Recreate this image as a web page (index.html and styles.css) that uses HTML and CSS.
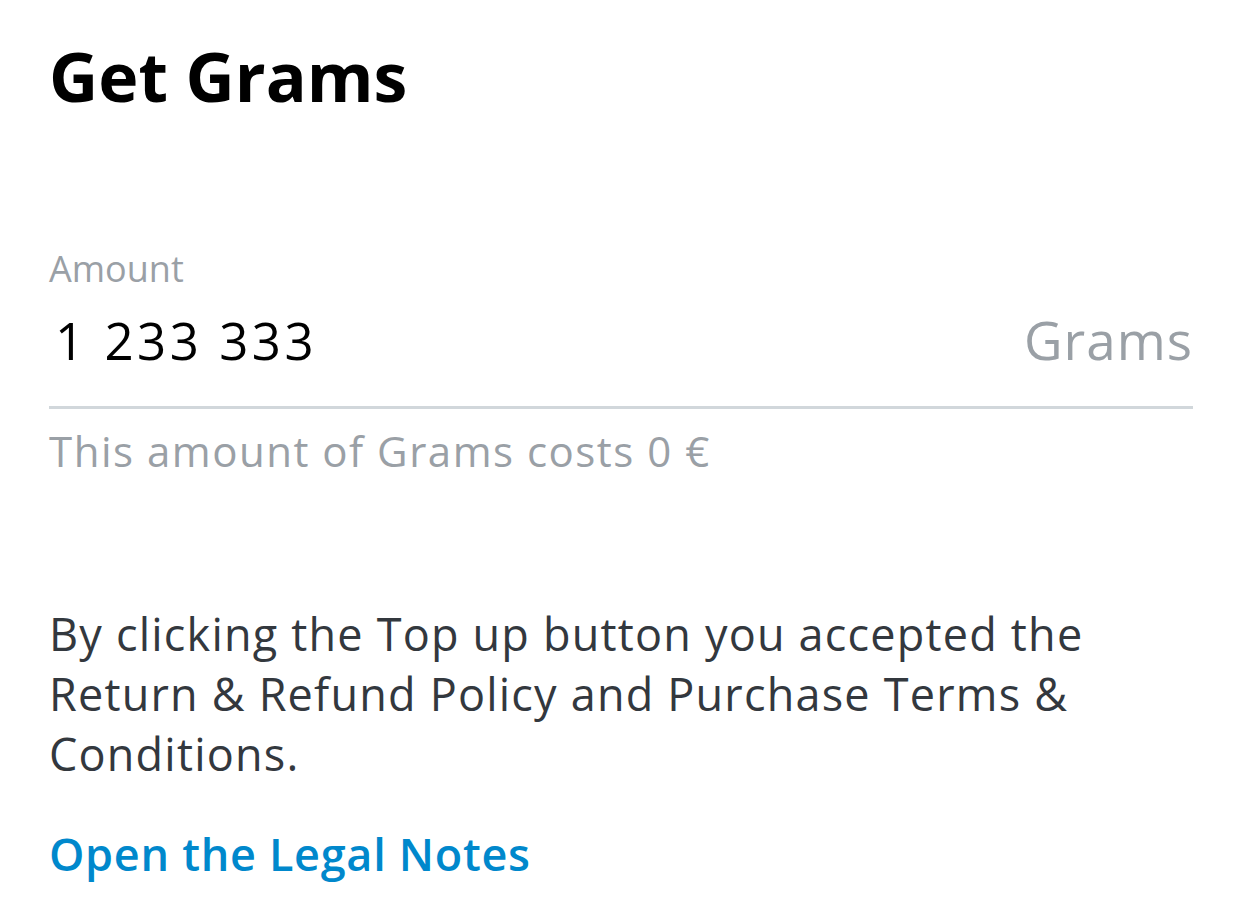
FILE: index.html
```html
<!DOCTYPE html>
<html lang="en">
<head>
    <meta charset="UTF-8">
    <meta name="viewport" content="width=device-width, initial-scale=1.0">
    <title>Get Grams</title>
    <link rel="stylesheet" href="styles.css">
</head>
<body>
    <div class="page">
        <h1 class="title">Get Grams</h1>

        <div class="field">
            <div class="field-label">Amount</div>
            <div class="field-row">
                <span class="field-value">1 233 333</span>
                <span class="field-unit">Grams</span>
            </div>
            <div class="field-hint">This amount of Grams costs 0 €</div>
        </div>

        <p class="terms">By clicking the Top up button you accepted the Return &amp; Refund Policy and Purchase Terms &amp; Conditions.</p>
        <a class="legal-link" href="#">Open the Legal Notes</a>
    </div>
</body>
</html>
```

FILE: styles.css
```css
body {
    margin: 0;
    font-family: "Open Sans", "Noto Sans", sans-serif;
    background-color: #ffffff;
    color: #000;
}

.page {
    padding: 0 49px;
}

.title {
    margin: 34px 0 0;
    font-size: 68px;
    line-height: 84px;
    font-weight: 700;
}

.field {
    margin-top: 129px;
}

.field-label {
    font-size: 36px;
    line-height: 44px;
    color: #9aa0a6;
}

.field-row {
    display: flex;
    justify-content: space-between;
    align-items: baseline;
    margin-top: 17px;
    padding-bottom: 34px;
    border-bottom: 3px solid #d1d7db;
}

.field-value {
    padding-left: 6px;
    font-size: 51px;
    line-height: 64px;
    letter-spacing: 3.5px;
}

.field-unit {
    font-size: 53px;
    line-height: 64px;
    color: #9aa0a6;
    letter-spacing: 1px;
}

.field-hint {
    margin-top: 14px;
    font-size: 42px;
    line-height: 56px;
    color: #9aa0a6;
    letter-spacing: 1.5px;
}

.terms {
    margin: 125px 0 0;
    font-size: 45px;
    line-height: 60px;
    color: #33383e;
    letter-spacing: 1.2px;
}

.legal-link {
    display: inline-block;
    margin-top: 40px;
    font-size: 45px;
    line-height: 60px;
    font-weight: 600;
    color: #0088cc;
    letter-spacing: 0.7px;
    text-decoration: none;
}
```
